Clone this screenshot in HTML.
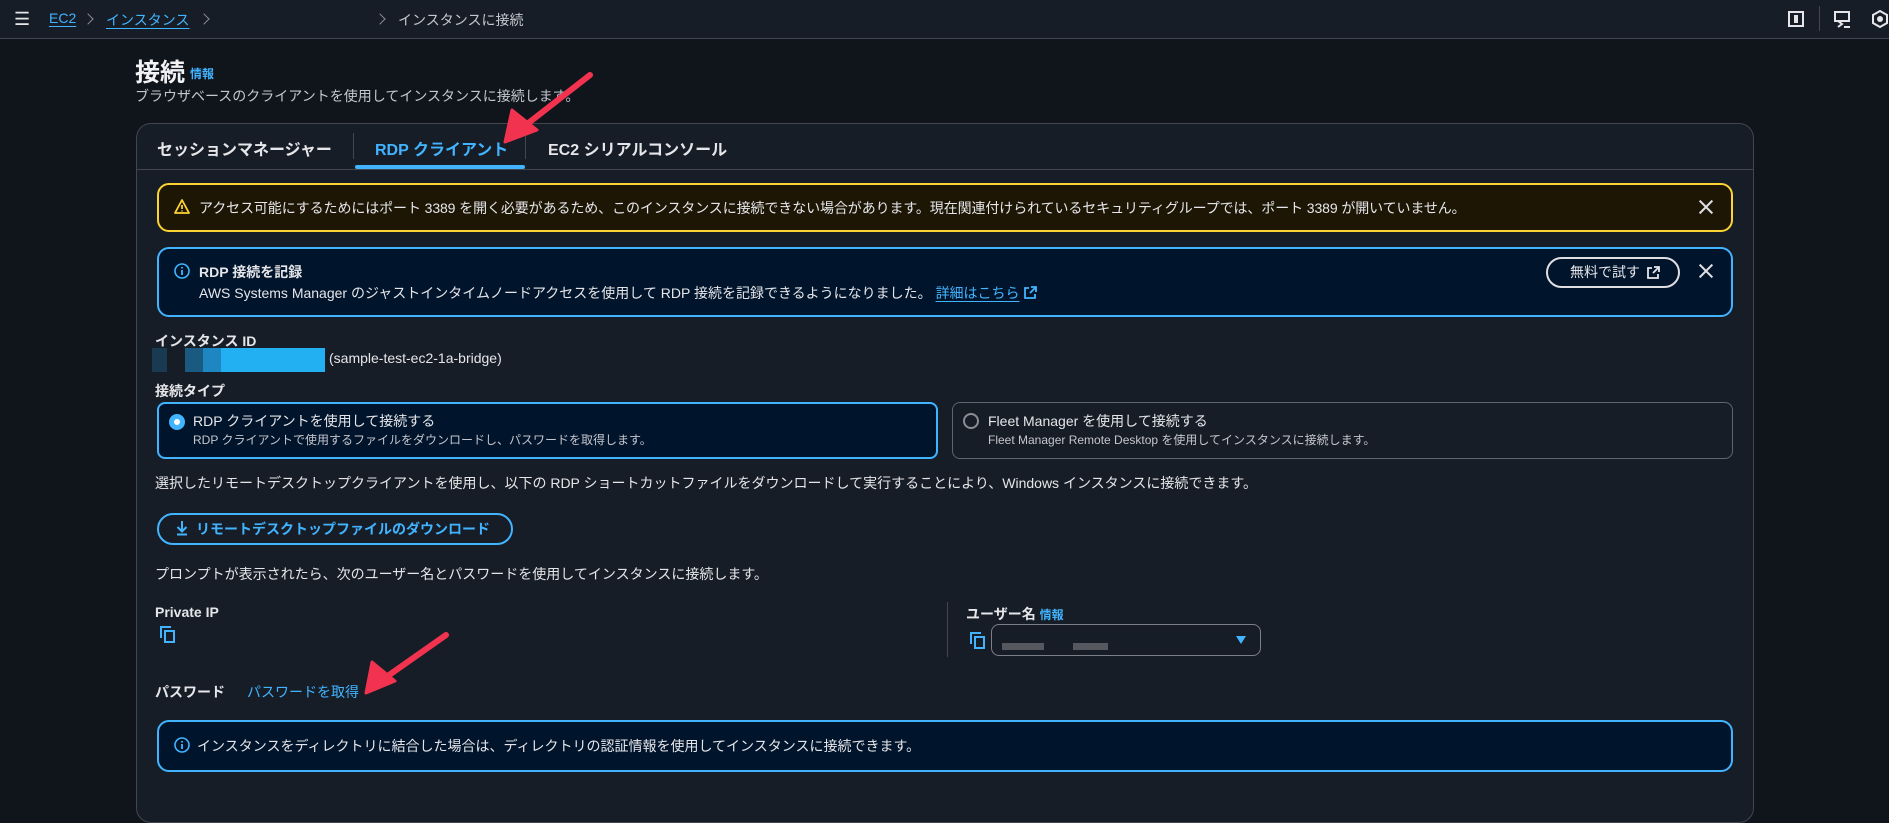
<!DOCTYPE html>
<html><head><meta charset="utf-8">
<style>
*{box-sizing:border-box;margin:0;padding:0}
body{width:1889px;height:781px;overflow:hidden;background:#10151c;font-family:"Liberation Sans","Noto Sans CJK JP",sans-serif;color:#dedee3;position:relative;font-size:14px}
.a{position:absolute;white-space:nowrap}
.top{position:absolute;left:0;top:0;width:1889px;height:39px;background:#161d26;border-bottom:1px solid #424650}
.blue{color:#42b4ff}
.ul{text-decoration:underline;text-underline-offset:3px}
.b{font-weight:bold}
.card{position:absolute;left:136px;top:123px;width:1618px;height:700px;background:#161d26;border:1px solid #424650;border-radius:15px}
.alert{position:absolute;border-radius:12px;border:2px solid #42b4ff;background:#00142b}
.yellow{border-color:#fbd332;background:#1d1605}
.x{position:absolute;width:14px;height:14px}
.x:before,.x:after{content:"";position:absolute;left:6px;top:-2px;width:2px;height:18px;background:#dedee3;transform:rotate(45deg)}
.x:after{transform:rotate(-45deg)}
.radio{position:absolute;width:16px;height:16px;border-radius:50%;border:2px solid #8c8c94}
.radio.on{border:5px solid #42b4ff;background:#fff}
.sub{font-size:12px;color:#c6c6cd}
.chev{position:absolute;width:8px;height:8px;border-top:1.5px solid #8c8c94;border-right:1.5px solid #8c8c94;transform:rotate(45deg)}
</style></head><body>
<div class="top"></div>
<div class="a" style="left:14px;top:9px;font-size:18px;color:#e6e6ea">☰</div>
<div class="a blue ul" style="left:49px;top:10px;font-size:14px">EC2</div>
<div class="chev" style="left:84px;top:15px"></div>
<div class="a blue ul" style="left:106px;top:10px;font-size:14px">インスタンス</div>
<div class="chev" style="left:200px;top:15px"></div>
<div class="chev" style="left:376px;top:15px"></div>
<div class="a" style="left:398px;top:10px;font-size:14px;color:#c6c6cd">インスタンスに接続</div>
<svg class="a" style="left:1788px;top:11px" width="16" height="16"><rect x="1" y="1" width="14" height="14" fill="none" stroke="#e6e6ea" stroke-width="2"/><rect x="6" y="4" width="4" height="8" fill="#e6e6ea"/></svg>
<div class="a" style="left:1819px;top:6px;width:1px;height:25px;background:#424650"></div>
<svg class="a" style="left:1834px;top:11px" width="18" height="17"><rect x="1" y="1" width="14" height="9" fill="none" stroke="#e6e6ea" stroke-width="2"/><path d="M4 10l4 3-4 3M10 16h6" stroke="#e6e6ea" stroke-width="2" fill="none"/></svg>
<svg class="a" style="left:1872px;top:10px" width="17" height="18"><path d="M8 1l7 4v8l-7 4-7-4V5z" fill="none" stroke="#e6e6ea" stroke-width="2"/><circle cx="8" cy="9" r="3" fill="#e6e6ea"/></svg>

<div class="a b" style="left:135px;top:53px;font-size:25px;color:#f2f2f5">接続</div>
<div class="a blue b" style="left:190px;top:65px;font-size:12px">情報</div>
<div class="a" style="left:135px;top:86px;font-size:14px;color:#c6c6cd">ブラウザベースのクライアントを使用してインスタンスに接続します。</div>

<div class="card"></div>
<div class="a" style="left:136px;top:169px;width:1618px;height:1px;background:#424650"></div>
<div class="a b" style="left:157px;top:136px;font-size:16px;color:#e6e6ea">セッションマネージャー</div>
<div class="a" style="left:353px;top:133px;width:1px;height:26px;background:#424650"></div>
<div class="a b blue" style="left:375px;top:136px;font-size:16px">RDP クライアント</div>
<div class="a" style="left:355px;top:165px;width:170px;height:4px;background:#42b4ff;border-radius:2px"></div>
<div class="a" style="left:525px;top:133px;width:1px;height:26px;background:#424650"></div>
<div class="a b" style="left:548px;top:136px;font-size:16px;color:#e6e6ea">EC2 シリアルコンソール</div>

<div class="alert yellow" style="left:157px;top:183px;width:1576px;height:49px"></div>
<svg class="a" style="left:174px;top:199px" width="16" height="15"><path d="M8 1L1 14h14z" fill="none" stroke="#fbd332" stroke-width="1.8" stroke-linejoin="round"/><path d="M8 6v4M8 11.5v1" stroke="#fbd332" stroke-width="1.8"/></svg>
<div class="a" style="left:199px;top:198px;font-size:14px;color:#e6e6ea;letter-spacing:-0.1px">アクセス可能にするためにはポート 3389 を開く必要があるため、このインスタンスに接続できない場合があります。現在関連付けられているセキュリティグループでは、ポート 3389 が開いていません。</div>
<div class="x" style="left:1699px;top:200px"></div>

<div class="alert" style="left:157px;top:247px;width:1576px;height:70px"></div>
<svg class="a" style="left:174px;top:263px" width="16" height="16"><circle cx="8" cy="8" r="7" fill="none" stroke="#42b4ff" stroke-width="1.6"/><path d="M8 7v5M8 4v1.5" stroke="#42b4ff" stroke-width="1.8"/></svg>
<div class="a b" style="left:199px;top:262px;font-size:14px;color:#e6e6ea">RDP 接続を記録</div>
<div class="a" style="left:199px;top:283px;font-size:14px;color:#e6e6ea">AWS Systems Manager のジャストインタイムノードアクセスを使用して RDP 接続を記録できるようになりました。 <span class="blue ul">詳細はこちら</span></div>
<svg class="a" style="left:1024px;top:286px" width="13" height="13"><path d="M5 2H1v10h10V8M7 1h5v5M12 1L6 7" stroke="#42b4ff" stroke-width="1.8" fill="none"/></svg>
<div class="a" style="left:1546px;top:257px;width:134px;height:31px;border:2px solid #dedee3;border-radius:16px;font-size:14px;line-height:27px;color:#e6e6ea;padding-left:22px">無料で試す</div>
<svg class="a" style="left:1647px;top:266px" width="13" height="13"><path d="M5 2H1v10h10V8M7 1h5v5M12 1L6 7" stroke="#e6e6ea" stroke-width="1.8" fill="none"/></svg>
<div class="x" style="left:1699px;top:264px"></div>

<div class="a b" style="left:155px;top:331px;font-size:14px;color:#e6e6ea">インスタンス ID</div>
<div class="a" style="left:152px;top:348px;width:15px;height:24px;background:#1a3a52"></div>
<div class="a" style="left:167px;top:348px;width:18px;height:24px;background:#161d26"></div>
<div class="a" style="left:185px;top:348px;width:18px;height:24px;background:#1a5a80"></div>
<div class="a" style="left:203px;top:348px;width:18px;height:24px;background:#1e86c0"></div>
<div class="a" style="left:221px;top:348px;width:104px;height:24px;background:#22b0f2"></div>
<div class="a" style="left:329px;top:350px;font-size:14px;color:#e6e6ea">(sample-test-ec2-1a-bridge)</div>

<div class="a b" style="left:155px;top:381px;font-size:14px;color:#e6e6ea">接続タイプ</div>
<div class="a" style="left:157px;top:402px;width:781px;height:57px;border:2px solid #42b4ff;border-radius:8px;background:#00142b"></div>
<div class="radio on" style="left:169px;top:414px"></div>
<div class="a" style="left:193px;top:411px;font-size:14px;color:#e6e6ea">RDP クライアントを使用して接続する</div>
<div class="a sub" style="left:193px;top:431px">RDP クライアントで使用するファイルをダウンロードし、パスワードを取得します。</div>
<div class="a" style="left:952px;top:402px;width:781px;height:57px;border:1px solid #5f6570;border-radius:8px"></div>
<div class="radio" style="left:963px;top:413px"></div>
<div class="a" style="left:988px;top:411px;font-size:14px;color:#e6e6ea">Fleet Manager を使用して接続する</div>
<div class="a sub" style="left:988px;top:431px">Fleet Manager Remote Desktop を使用してインスタンスに接続します。</div>

<div class="a" style="left:155px;top:473px;font-size:14px;color:#e6e6ea">選択したリモートデスクトップクライアントを使用し、以下の RDP ショートカットファイルをダウンロードして実行することにより、Windows インスタンスに接続できます。</div>
<div class="a" style="left:157px;top:513px;width:356px;height:32px;border:2px solid #42b4ff;border-radius:16px"></div>
<svg class="a" style="left:175px;top:520px" width="14" height="16"><path d="M7 1v10M2.5 7l4.5 4.5L11.5 7M2 14.5h10" stroke="#42b4ff" stroke-width="2" fill="none"/></svg>
<div class="a b blue" style="left:196px;top:519px;font-size:14px">リモートデスクトップファイルのダウンロード</div>

<div class="a" style="left:155px;top:564px;font-size:14px;color:#e6e6ea">プロンプトが表示されたら、次のユーザー名とパスワードを使用してインスタンスに接続します。</div>
<div class="a b" style="left:155px;top:604px;font-size:14px;color:#e6e6ea">Private IP</div>
<svg class="a" style="left:160px;top:626px" width="16" height="17"><path d="M1 12V1h10" stroke="#42b4ff" stroke-width="2" fill="none"/><rect x="5" y="5" width="9" height="11" stroke="#42b4ff" stroke-width="2" fill="none"/></svg>
<div class="a" style="left:947px;top:602px;width:1px;height:55px;background:#424650"></div>
<div class="a b" style="left:966px;top:604px;font-size:14px;color:#e6e6ea">ユーザー名 <span class="blue" style="font-size:12px">情報</span></div>
<svg class="a" style="left:970px;top:632px" width="16" height="17"><path d="M1 12V1h10" stroke="#42b4ff" stroke-width="2" fill="none"/><rect x="5" y="5" width="9" height="11" stroke="#42b4ff" stroke-width="2" fill="none"/></svg>
<div class="a" style="left:991px;top:624px;width:270px;height:32px;border:1px solid #7a7f88;border-radius:8px"></div>
<div class="a" style="left:1002px;top:643px;width:42px;height:7px;background:#55585f"></div>
<div class="a" style="left:1073px;top:643px;width:35px;height:7px;background:#55585f"></div>
<svg class="a" style="left:1235px;top:635px" width="12" height="10"><path d="M1 1h10L6 9z" fill="#42b4ff"/></svg>

<div class="a b" style="left:155px;top:682px;font-size:14px;color:#e6e6ea">パスワード</div>
<div class="a blue" style="left:247px;top:682px;font-size:14px">パスワードを取得</div>

<div class="alert" style="left:157px;top:720px;width:1576px;height:52px"></div>
<svg class="a" style="left:174px;top:737px" width="16" height="16"><circle cx="8" cy="8" r="7" fill="none" stroke="#42b4ff" stroke-width="1.6"/><path d="M8 7v5M8 4v1.5" stroke="#42b4ff" stroke-width="1.8"/></svg>
<div class="a" style="left:197px;top:736px;font-size:14px;color:#e6e6ea">インスタンスをディレクトリに結合した場合は、ディレクトリの認証情報を使用してインスタンスに接続できます。</div>

<svg class="a" style="left:0;top:0" width="1889" height="781">
<path d="M590 75L522 128" stroke="#f2334f" stroke-width="6" stroke-linecap="round"/>
<path d="M505 142L512 110L537 130z" fill="#f2334f" stroke="#f2334f" stroke-width="3" stroke-linejoin="round"/>
<path d="M446 635L382 680" stroke="#f2334f" stroke-width="6" stroke-linecap="round"/>
<path d="M366 693L372 662L395 681z" fill="#f2334f" stroke="#f2334f" stroke-width="3" stroke-linejoin="round"/>
</svg>
</body></html>
